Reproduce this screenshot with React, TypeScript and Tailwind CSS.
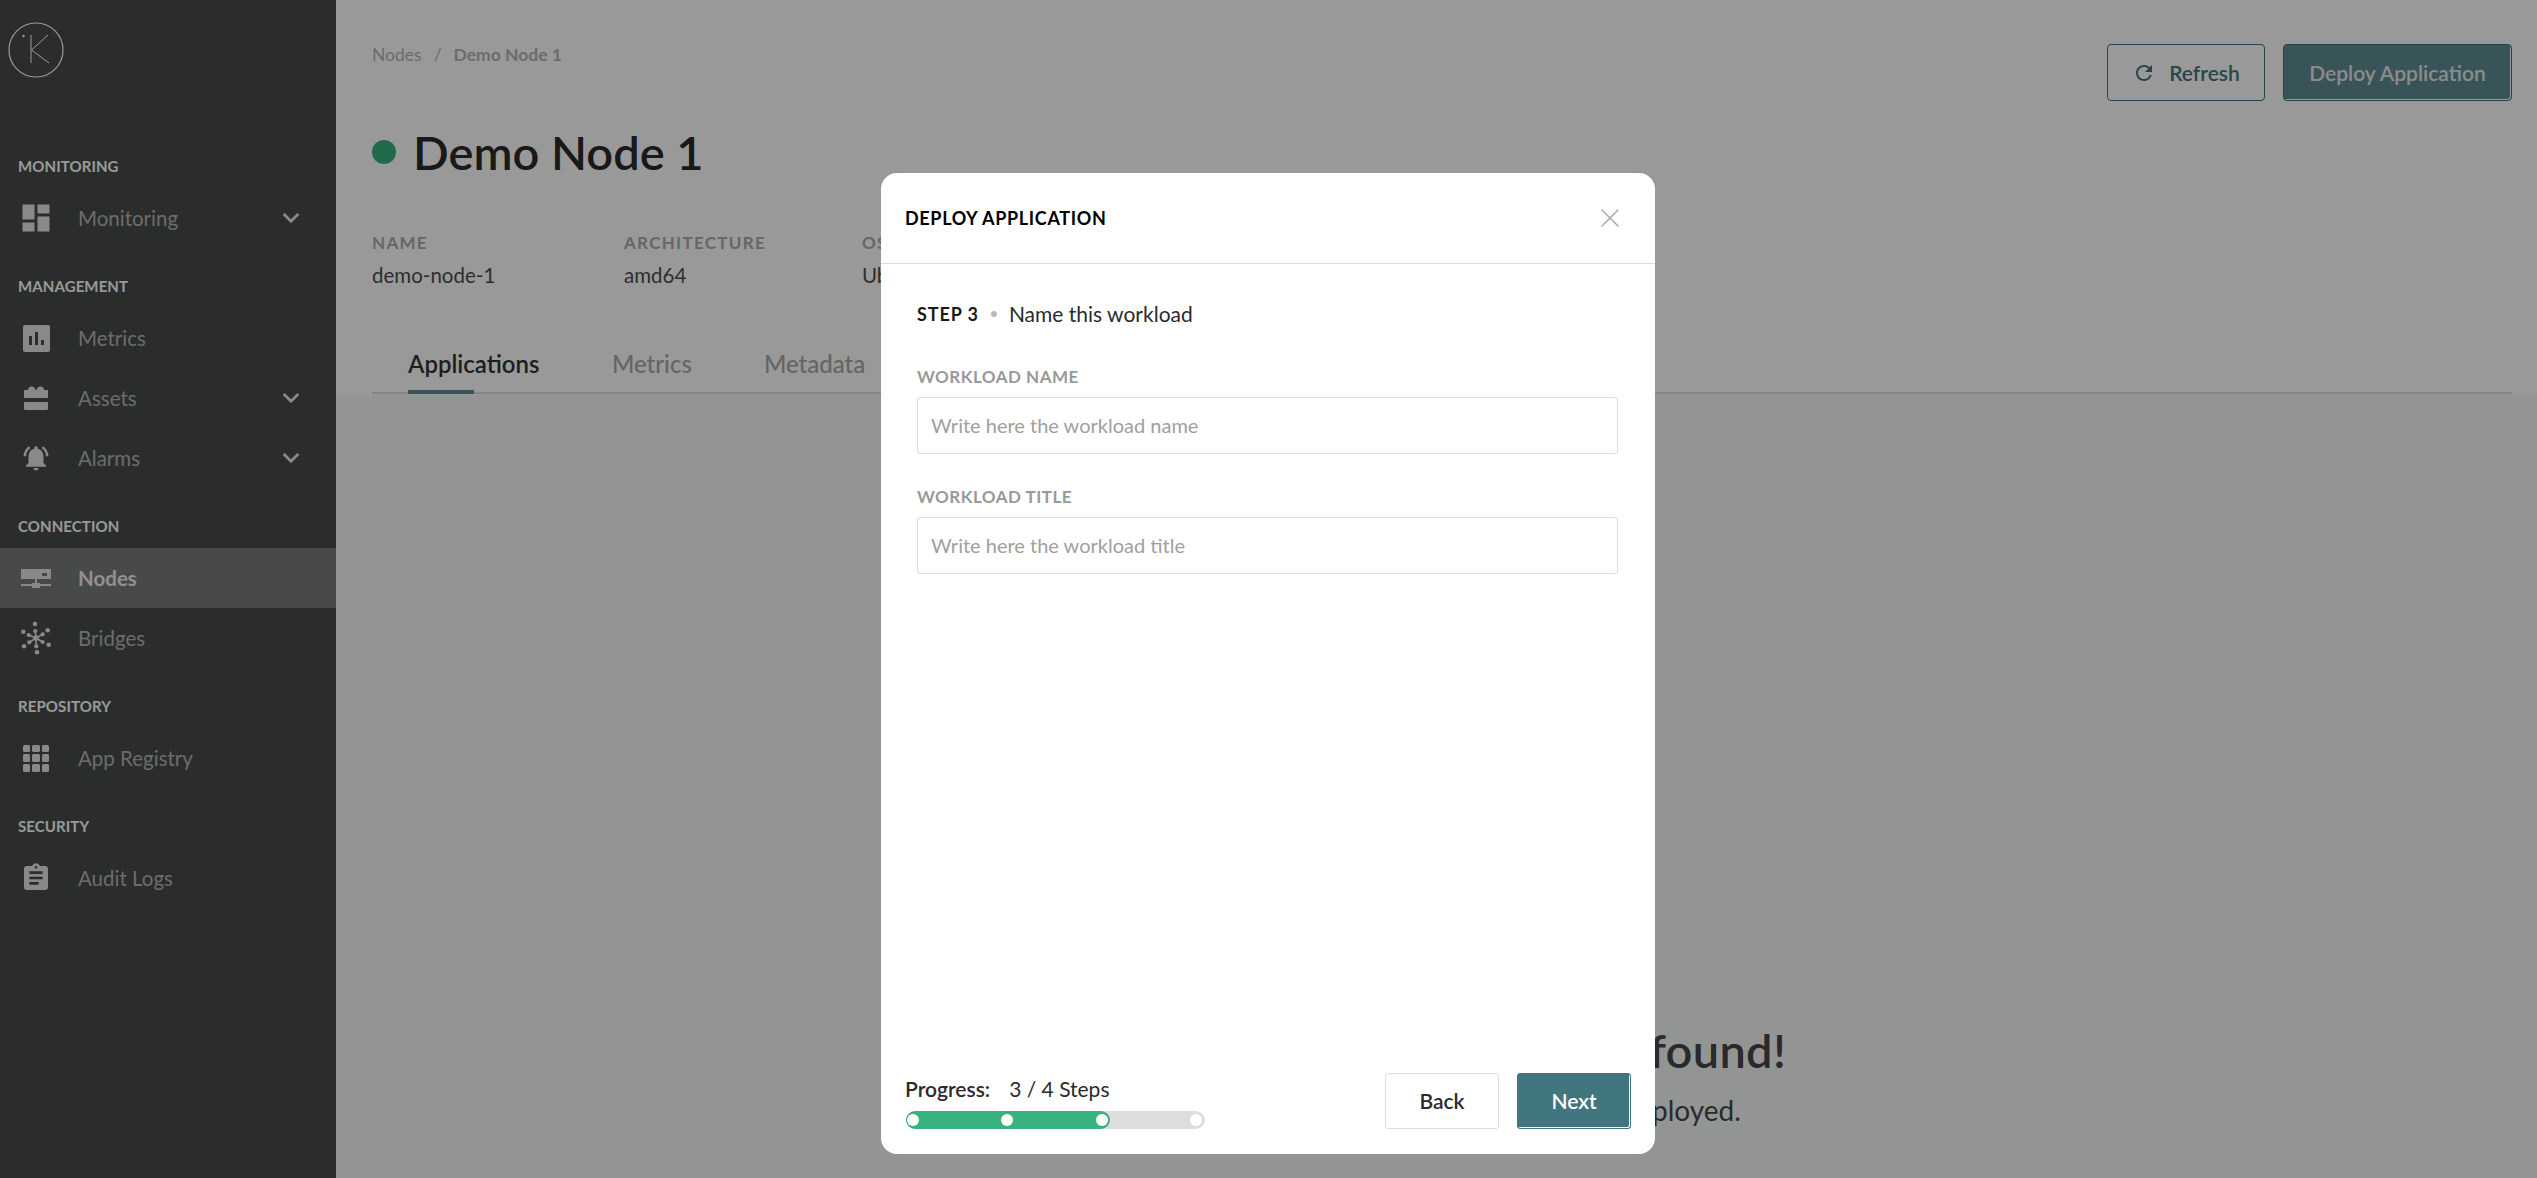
import { ChevronDown, X } from "lucide-react";
import {
  MdAssignment,
  MdDashboard,
  MdNotificationsActive,
  MdRefresh,
} from "react-icons/md";

const font = "font-['Lato','Liberation_Sans',sans-serif]";

const AssetsIcon = () => (
  <svg viewBox="0 0 24 24" className="h-6 w-6 fill-current">
    <path d="M0 4h4Q4.5.5 7.5.5 11 .5 11.5 4h1.3Q13 .5 16.5.5 20 .5 20 4h4v8H0z" />
    <path d="M0 16h24v6.5a1.5 1.5 0 0 1-1.5 1.5h-21a1.5 1.5 0 0 1-1.5-1.5z" />
  </svg>
);

const MetricsIcon = () => (
  <svg viewBox="0 0 27 27" className="h-[27px] w-[27px] fill-current">
    <path
      fillRule="evenodd"
      d="M2 0h23a2 2 0 0 1 2 2v23a2 2 0 0 1-2 2h-23a2 2 0 0 1-2-2v-23a2 2 0 0 1 2-2zM6 11v9h3v-9zM12 7v13h3v-13zM18 15v5h3v-5z"
    />
  </svg>
);

const NodesIcon = () => (
  <svg viewBox="0 0 30 19" className="h-[19px] w-[30px] fill-current">
    <path
      fillRule="evenodd"
      d="M1 0h28a1 1 0 0 1 1 1v8a1 1 0 0 1-1 1h-28a1 1 0 0 1-1-1v-8a1 1 0 0 1 1-1zM21 4v3h5v-3z"
    />
    <path d="M14 10h2v4h-2z" />
    <path d="M0 15h11v-1h8v1h11v2h-11v2h-8v-2h-11z" />
  </svg>
);

const BridgesIcon = () => (
  <svg viewBox="-15 -17 30 34" className="h-[34px] w-[30px] fill-current stroke-current">
    <path
      strokeWidth="1.6"
      d="M0 0L-.7-7M0 0L6.7-3.7M0 0L6.7 4M0 0L.3 8.3M0 0L-6.7 4.3M0 0L-7.3-3"
    />
    <g stroke="none">
      <circle r="2.8" />
      <circle cx="-1" cy="-14" r="2.3" />
      <circle cx="11.7" cy="-7.7" r="2.3" />
      <circle cx="12.7" cy="6.7" r="2.3" />
      <circle cx="1" cy="14.3" r="2.3" />
      <circle cx="-12" cy="8.3" r="2.3" />
      <circle cx="-12.7" cy="-6.3" r="2.3" />
      <circle cx="-.7" cy="-7" r="2.1" />
      <circle cx="6.7" cy="-3.7" r="2.1" />
      <circle cx="6.7" cy="4" r="2.1" />
      <circle cx=".3" cy="8.3" r="2.1" />
      <circle cx="-6.7" cy="4.3" r="2.1" />
      <circle cx="-7.3" cy="-3" r="2.1" />
    </g>
  </svg>
);

const AppsIcon = () => (
  <div className="grid h-[27px] w-[27px] grid-cols-3 gap-[2px]">
    {Array.from({ length: 9 }).map((_, i) => (
      <span key={i} className="rounded-[1.5px] bg-current" />
    ))}
  </div>
);

const NavLabel = ({ children }: { children: string }) => (
  <div className="mt-[16px] flex h-[44px] items-center pl-[18px] text-[15px] leading-none font-bold tracking-[0.1px] text-white">
    {children}
  </div>
);

const NavItem = ({
  icon,
  label,
  chevron,
  active,
}: {
  icon: React.ReactNode;
  label: string;
  chevron?: boolean;
  active?: boolean;
}) => (
  <div className={`flex h-[60px] items-center ${active ? "bg-[#787b7a]" : ""}`}>
    <div className="flex w-[72px] justify-center text-[#e4e4e4]">{icon}</div>
    <span
      className={`ml-[6px] text-[20.5px] ${active ? "font-bold text-[#f0f0f0]" : "text-[#b4b4b4]"}`}
    >
      {label}
    </span>
    {chevron && (
      <ChevronDown
        className="mr-[32px] ml-auto h-[26px] w-[26px] text-[#e4e4e4]"
        strokeWidth={2.6}
      />
    )}
  </div>
);

const Sidebar = () => (
  <aside className="flex w-[336px] shrink-0 flex-col bg-[#494c4b]">
    <div className="h-[128px] pt-[22px] pl-[8px]">
      <svg viewBox="0 0 56 56" className="h-[56px] w-[56px] text-white">
        <circle cx="28" cy="28" r="27" fill="none" stroke="currentColor" strokeWidth="1.2" />
        <path d="M23 13v28M40 13L23.5 28 41 41" fill="none" stroke="currentColor" strokeWidth="1" />
        <circle cx="15.5" cy="14" r="1.2" fill="currentColor" />
      </svg>
    </div>
    <NavLabel>MONITORING</NavLabel>
    <NavItem icon={<MdDashboard className="h-[36px] w-[36px]" />} label="Monitoring" chevron />
    <NavLabel>MANAGEMENT</NavLabel>
    <NavItem icon={<MetricsIcon />} label="Metrics" />
    <NavItem icon={<AssetsIcon />} label="Assets" chevron />
    <NavItem icon={<MdNotificationsActive className="h-[30px] w-[30px]" />} label="Alarms" chevron />
    <NavLabel>CONNECTION</NavLabel>
    <NavItem icon={<NodesIcon />} label="Nodes" active />
    <NavItem icon={<BridgesIcon />} label="Bridges" />
    <NavLabel>REPOSITORY</NavLabel>
    <NavItem icon={<AppsIcon />} label="App Registry" />
    <NavLabel>SECURITY</NavLabel>
    <NavItem icon={<MdAssignment className="h-[32px] w-[32px]" />} label="Audit Logs" />
  </aside>
);

const Meta = ({ label, value, width }: { label: string; value: string; width: string }) => (
  <div className={width}>
    <div className="text-[17px] leading-5 font-bold tracking-[1.3px] text-[#ababab]">{label}</div>
    <div className="mt-[12px] text-[20.5px] leading-5 text-[#4d4d4d]">{value}</div>
  </div>
);

const Header = () => (
  <header className="h-[395px] bg-white pr-[25px] pl-[36px]">
    <div className="flex items-start justify-between pt-[44px]">
      <div className="flex items-center text-[17.5px] leading-[22px] text-[#b4b4b4]">
        <span>Nodes</span>
        <span className="mx-[12px]">/</span>
        <span className="font-bold">Demo Node 1</span>
      </div>
      <div className="flex gap-[18px]">
        <button className="flex h-[57px] w-[158px] items-center justify-center gap-[13px] rounded-[4px] border border-[#41767f] text-[21px] font-semibold text-[#41767f]">
          <MdRefresh className="h-[24px] w-[24px]" />
          Refresh
        </button>
        <button className="h-[57px] w-[229px] rounded-[4px] border border-[#41767f] bg-[#5f8d95] text-[21px] font-semibold text-[#e8e8e8] shadow-[inset_-1px_-1px_0_#ffffff]">
          Deploy Application
        </button>
      </div>
    </div>
    <div className="mt-[21px] flex items-center gap-[17px]">
      <span className="h-[24px] w-[24px] rounded-full bg-[#38b27f]" />
      <h1 className="text-[47px] leading-[60px] font-semibold text-[#2b2b2b]">Demo Node 1</h1>
    </div>
    <div className="mt-[51px] flex">
      <Meta label="NAME" value="demo-node-1" width="w-[252px]" />
      <Meta label="ARCHITECTURE" value="amd64" width="w-[238px]" />
      <Meta label="OS" value="Ubuntu" width="w-[200px]" />
    </div>
    <div className="mt-[51px] flex h-[58px] gap-[72px] border-b-2 border-[#e0e0e0] pl-[36px]">
      <div className="h-[58px] border-b-4 border-[#5f8d95] pt-[13px]">
        <span className="block w-[66px] text-[24px] leading-[30px] font-semibold whitespace-nowrap text-[#333333]">
          Applications
        </span>
      </div>
      <span className="ml-[66px] pt-[13px] text-[24px] leading-[30px] font-medium text-[#a8a8a8]">Metrics</span>
      <span className="pt-[13px] text-[24px] leading-[30px] font-medium text-[#a8a8a8]">Metadata</span>
    </div>
  </header>
);

const DeployModal = () => (
  <div className="absolute inset-0 flex justify-center bg-black/40 pt-[173px] pr-px">
    <div className="flex h-[981px] w-[774px] flex-col rounded-[16px] bg-white">
      <div className="flex h-[91px] items-center justify-between border-b border-[#dddddd] pr-[29px] pl-[24px]">
        <h2 className="text-[18px] font-bold tracking-[0.65px] text-black">DEPLOY APPLICATION</h2>
        <X className="h-[32px] w-[32px] text-[#a8a8a8]" strokeWidth={1.1} />
      </div>
      <div className="flex-1 px-[36px] pt-[38px]">
        <div className="flex items-center text-[21px] leading-6">
          <span className="text-[18px] font-bold tracking-[0.9px] text-[#1a1a1a]">STEP 3</span>
          <span className="mx-[12px] h-[6px] w-[6px] rounded-full bg-[#bbbbbb]" />
          <span className="text-[#2b2b2b]">Name this workload</span>
        </div>
        <label className="mt-[41px] block text-[17px] leading-5 font-bold tracking-[0.5px] text-[#999999]">
          WORKLOAD NAME
        </label>
        <input
          placeholder="Write here the workload name"
          className="mt-[10px] h-[57px] w-[701px] rounded-[3px] border border-[#dddddd] px-[13px] pb-[2px] text-[20px] placeholder:text-[#a0a0a0]"
        />
        <label className="mt-[33px] block text-[17px] leading-5 font-bold tracking-[0.5px] text-[#999999]">
          WORKLOAD TITLE
        </label>
        <input
          placeholder="Write here the workload title"
          className="mt-[10px] h-[57px] w-[701px] rounded-[3px] border border-[#dddddd] px-[13px] pb-[2px] text-[20px] placeholder:text-[#a0a0a0]"
        />
      </div>
      <div className="flex items-end justify-between pr-[24px] pb-[25px] pl-[25px]">
        <div>
          <div className="-ml-px text-[21px] leading-6 text-[#2b2b2b]">
            <span className="font-semibold">Progress:</span>
            <span className="ml-[19px]">3 / 4 Steps</span>
          </div>
          <div className="relative mt-[10px] h-[18px] w-[299px] rounded-full bg-[#dddddd]">
            <div className="absolute inset-y-0 left-0 w-[204px] rounded-full bg-[#38b27f]" />
            <div className="absolute inset-0 flex items-center justify-between pr-[3px] pl-px">
              {[0, 1, 2, 3].map((i) => (
                <span key={i} className="h-[12px] w-[12px] rounded-full bg-white" />
              ))}
            </div>
          </div>
        </div>
        <div className="flex gap-[18px]">
          <button className="h-[56px] w-[114px] rounded-[3px] border border-[#dddddd] text-[21px] font-semibold text-[#2b2b2b]">
            Back
          </button>
          <button className="h-[56px] w-[114px] rounded-[3px] border border-[#41767f] bg-[#41767f] text-[21px] font-semibold text-white shadow-[inset_-1px_-1px_0_#ffffff]">
            Next
          </button>
        </div>
      </div>
    </div>
  </div>
);

export default function App() {
  return (
    <div className={`relative flex h-[1178px] overflow-hidden ${font}`}>
      <Sidebar />
      <main className="flex-1 bg-[#f5f8f7]">
        <Header />
        <div className="flex flex-col items-center pt-[627px] pl-[224px] text-[#474747]">
          <div className="text-[47px] leading-[56px] font-semibold tracking-[0.3px] whitespace-nowrap">No applications found!</div>
          <div className="mt-[14px] text-[28px] leading-9 whitespace-nowrap">No applications were deployed.</div>
        </div>
      </main>
      <DeployModal />
    </div>
  );
}
